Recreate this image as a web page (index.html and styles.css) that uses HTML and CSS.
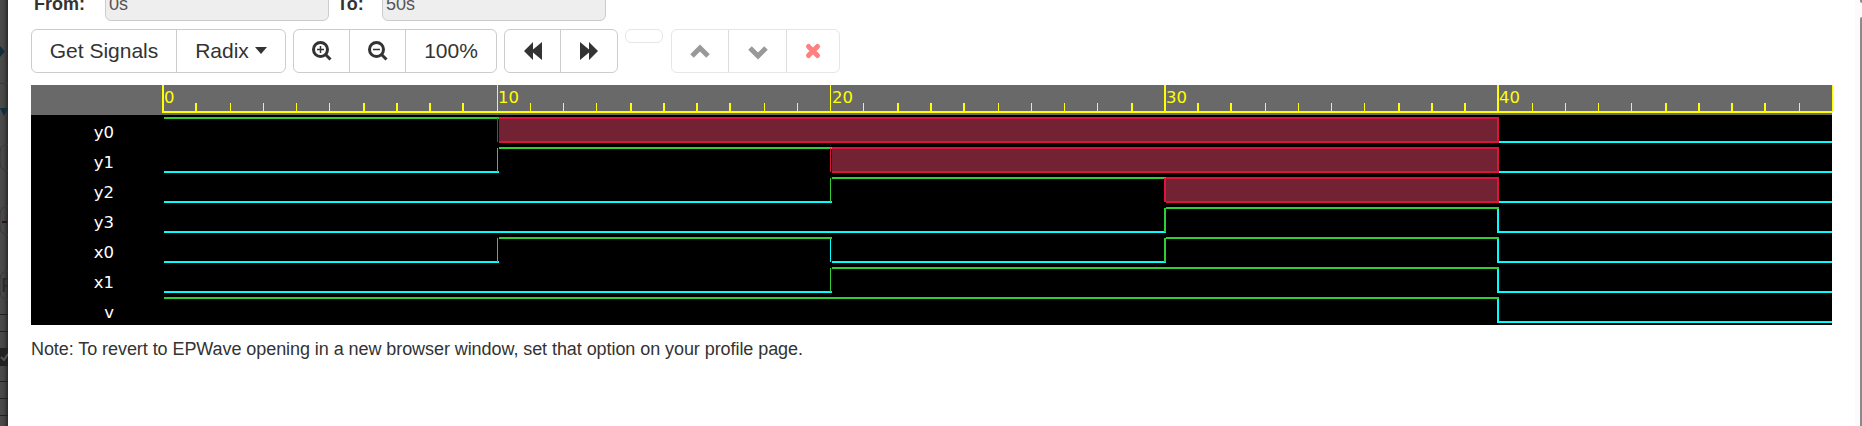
FILE: index.html
```html
<!DOCTYPE html>
<html lang="en">
<head>
<meta charset="utf-8">
<title>EPWave</title>
<link rel="stylesheet" href="styles.css">
</head>
<body>
<div class="page">
  <svg class="backdrop" width="8" height="426" viewBox="0 0 8 426">
    <defs><linearGradient id="shade"><stop offset="0" stop-color="#4b4b4b"/><stop offset=".5" stop-color="#454545"/><stop offset="1" stop-color="#292929"/></linearGradient></defs>
    <rect width="8" height="426" fill="url(#shade)"/>
    <path d="M0 46l5 5.500-5 5.500zM0 108h8l-4 8z" fill="#102d3c"/>
    <path d="M0 83.500h8M8 144.500q-8 0-8 8v10q0 8 8 8M8 206.500q-8 0-8 8v12q0 8 8 8M8 271.500q-8 0-8 8v12q0 8 8 8" fill="none" stroke="#383838"/>
    <path d="M2 221h5v2H2z" fill="#241313"/>
    <text x="1" y="292" class="back-text">F</text>
    <path d="M0 314.500h8M0 331.500h8M0 381.500h8M0 398.500h8M0 415.500h8" stroke="#202020"/>
    <path d="M0 348h8v18H0z" fill="#222"/>
    <path d="M1 357l3 3 4-6" fill="none" stroke="#555" stroke-width="2"/>
  </svg>
  <main class="modal">
    <div class="range">
      <label class="range-label">From:</label><div class="field">0s</div>
      <label class="range-label to">To:</label><div class="field">50s</div>
    </div>
    <div class="toolbar">
      <div class="group">
        <button class="btn signals">Get Signals</button>
        <button class="btn radix">Radix<span class="caret"></span></button>
      </div>
      <div class="group">
        <button class="btn zoom"><svg width="20" height="20" viewBox="0 0 20 20"><circle cx="8.500" cy="8.500" r="7" class="lens"/><path d="M13.500 13.500l5 5" class="handle"/><path d="M5 8.500h7M8.500 5v7" class="sign"/></svg></button>
        <button class="btn zoom"><svg width="20" height="20" viewBox="0 0 20 20"><circle cx="8.500" cy="8.500" r="7" class="lens"/><path d="M13.500 13.500l5 5" class="handle"/><path d="M5 8.500h7" class="sign"/></svg></button>
        <button class="btn percent">100%</button>
      </div>
      <div class="group">
        <button class="btn seek"><svg width="20" height="20" viewBox="0 0 20 20"><path d="M1 10L10 1v7.500L19 1v18l-9-7.500V19z"/></svg></button>
        <button class="btn seek"><svg width="20" height="20" viewBox="0 0 20 20"><path d="M19 10L10 1v7.500L1 1v18l9-7.500V19z"/></svg></button>
      </div>
      <div class="group empty"></div>
      <div class="group disabled">
        <button class="btn move"><svg width="20" height="20" viewBox="0 0 20 20"><path d="M2 15l8-8 8 8" class="chevron"/></svg></button>
        <button class="btn move"><svg width="20" height="20" viewBox="0 0 20 20"><path d="M2 7l8 8 8-8" class="chevron"/></svg></button>
        <button class="btn remove"><svg width="20" height="20" viewBox="0 0 20 20"><path d="M5.500 5.500l9 9M14.500 5.500l-9 9" class="cross"/></svg></button>
      </div>
    </div>
    <svg class="wave" width="1802" height="240" viewBox="31 85 1802 240">
      <path d="M31 85h1801v240H31z" fill="#000"/>
      <path d="M31 85h1801v30H31z" fill="#696969"/>
      <g class="ruler">
        <path d="M163 112H1832" class="w2"/>
        <path class="w2" d="M163 85v28M1165 85v28M1498 85v28M196 103v8M364 103v8M397 103v8M430 103v8M463 103v8M631 103v8M664 103v8M697 103v8M730 103v8M898 103v8M931 103v8M964 103v8M1132 103v8M1198 103v8M1231 103v8M1399 103v8M1432 103v8M1465 103v8M1666 103v8M1699 103v8M1732 103v8M1765 103v8"/>
        <path class="w1" d="M497.500 85v28M830.500 85v28M1832.500 85v27M230.500 103v8M263.500 103v8M296.500 103v8M329.500 103v8M530.500 103v8M563.500 103v8M596.500 103v8M764.500 103v8M797.500 103v8M863.500 103v8M998.500 103v8M1031.500 103v8M1064.500 103v8M1097.500 103v8M1265.500 103v8M1298.500 103v8M1331.500 103v8M1364.500 103v8M1532.500 103v8M1565.500 103v8M1598.500 103v8M1631.500 103v8M1799.500 103v8"/>
      </g>
      <g class="times"><text x="164" y="103">0</text><text x="498" y="103">10</text><text x="832" y="103">20</text><text x="1166" y="103">30</text><text x="1499" y="103">40</text></g>
      <g class="names"><text x="114" y="138">y0</text><text x="114" y="168">y1</text><text x="114" y="198">y2</text><text x="114" y="228">y3</text><text x="114" y="258">x0</text><text x="114" y="288">x1</text><text x="114" y="318">v</text></g>
      <g class="unknown-fill"><path d="M499 118h999v24H499zM832 148h666v24H832zM1166 178h332v24h-332z"/></g>
      <path class="low" d="M1498 142H1832M164 172H499M1498 172H1832M164 202H832M1498 202H1832M164 232H1166M1498 208v24H1832M164 262H499M832 262H1166M1498 238v24H1832M164 292H832M1498 268v24H1832M1498 298v24H1832"/>
      <path class="low thin" d="M830.500 238v24"/>
      <path class="high" d="M164 118H499M499 148H832M832 178H1166M1165 232v-24M1166 208H1499M499 238H832M1165 262v-24M1166 238H1499M832 268H1499M164 298H1499"/>
      <path class="high thin" d="M497.500 148v24M830.500 178v24M497.500 238v24M830.500 268v24"/>
      <path class="unknown" d="M499 118H1498V142H499M832 148H1498V172H832M1166 178H1498V202H1166M1165 178v24"/>
      <path class="unknown thin" d="M497.500 118v24M830.500 148v24"/>
    </svg>
    <p class="note">Note: To revert to EPWave opening in a new browser window, set that option on your profile page.</p>
  </main>
  <div class="scrollbar"><div class="arrow"></div><div class="thumb"></div></div>
</div>
</body>
</html>
```
FILE: styles.css
```css
* { box-sizing: border-box; }
body { margin: 0; background: #fff; font-family: "Liberation Sans", Arial, sans-serif; color: #333; overflow: hidden; }
.page { display: flex; height: 426px; overflow: hidden; }
.backdrop { flex: none; }
.back-text { font: 21px "Liberation Sans", Arial, sans-serif; fill: #292929; }
.modal { flex: 1; min-width: 0; padding-left: 23px; }
.range { display: flex; align-items: flex-end; height: 21px; padding-left: 3px; }
.range-label { width: 71px; font-size: 18px; font-weight: bold; line-height: 30px; height: 32px; }
.range-label.to { width: 45px; margin-left: 8px; }
.field { width: 224px; height: 42px; border: 1px solid #ccc; border-radius: 6px; background: #eee; color: #555; font-size: 18px; line-height: 48px; padding-left: 3px; }
.toolbar { display: flex; align-items: flex-start; gap: 7px; margin-top: 8px; height: 56px; }
.group { display: flex; height: 44px; border: 1px solid #ccc; border-radius: 6px; }
.btn { display: flex; align-items: center; justify-content: center; border: 0; border-left: 1px solid #ccc; background: transparent; padding: 0; font: 21px/30px "Liberation Sans", Arial, sans-serif; color: #333; }
.btn:first-child { border-left: 0; }
.btn svg { fill: #333; display: block; }
.signals { width: 144px; }
.radix { width: 109px; }
.caret { margin: 0 0 2px 6px; border: 6px solid transparent; border-top: 7px solid #333; border-bottom: 0; }
.zoom { width: 56px; }
.zoom:first-child { width: 55px; }
.percent { width: 91px; }
.seek { width: 57px; }
.seek:first-child { width: 55px; }
.lens { fill: none; stroke: #333; stroke-width: 3; }
.handle { stroke: #333; stroke-width: 3; }
.sign { stroke: #333; stroke-width: 1.5; }
.group.empty { width: 38px; height: 14px; border-color: #e6e6e6; }
.group.disabled { margin-left: 1px; border-color: #e6e6e6; }
.disabled .btn { border-color: #ddd; }
.move { width: 58px; }
.move:first-child { width: 56px; }
.remove { width: 53px; }
.chevron { fill: none; stroke: #999; stroke-width: 5; }
.cross { stroke: #ff8080; stroke-width: 5; stroke-linecap: round; }
.wave { display: block; }
.wave path { shape-rendering: crispEdges; }
.w1, .w2 { stroke: #ff0; fill: none; }
.w2 { stroke-width: 2; }
.times, .names { font: 16.5px "DejaVu Sans", sans-serif; }
.times { fill: #ff0; }
.names { fill: #fff; text-anchor: end; }
.unknown-fill { fill: #722232; }
.low, .high, .unknown { fill: none; stroke-width: 2; }
.low { stroke: #0ff; }
.high { stroke: #32cd32; }
.unknown { stroke: #dc143c; }
.wave .thin { stroke-width: 1; }
.note { margin: 9px 0 0; font-size: 18px; line-height: 30px; letter-spacing: -0.068px; }
.scrollbar { width: 7px; background: #fbfbfb; padding-left: 5px; }
.arrow { height: 3px; background: #8b8b8b; border-radius: 0 0 0 2px; margin-bottom: 14px; }
.thumb { height: 409px; background: #8b8b8b; border-radius: 3px 0 0 0; }
```
